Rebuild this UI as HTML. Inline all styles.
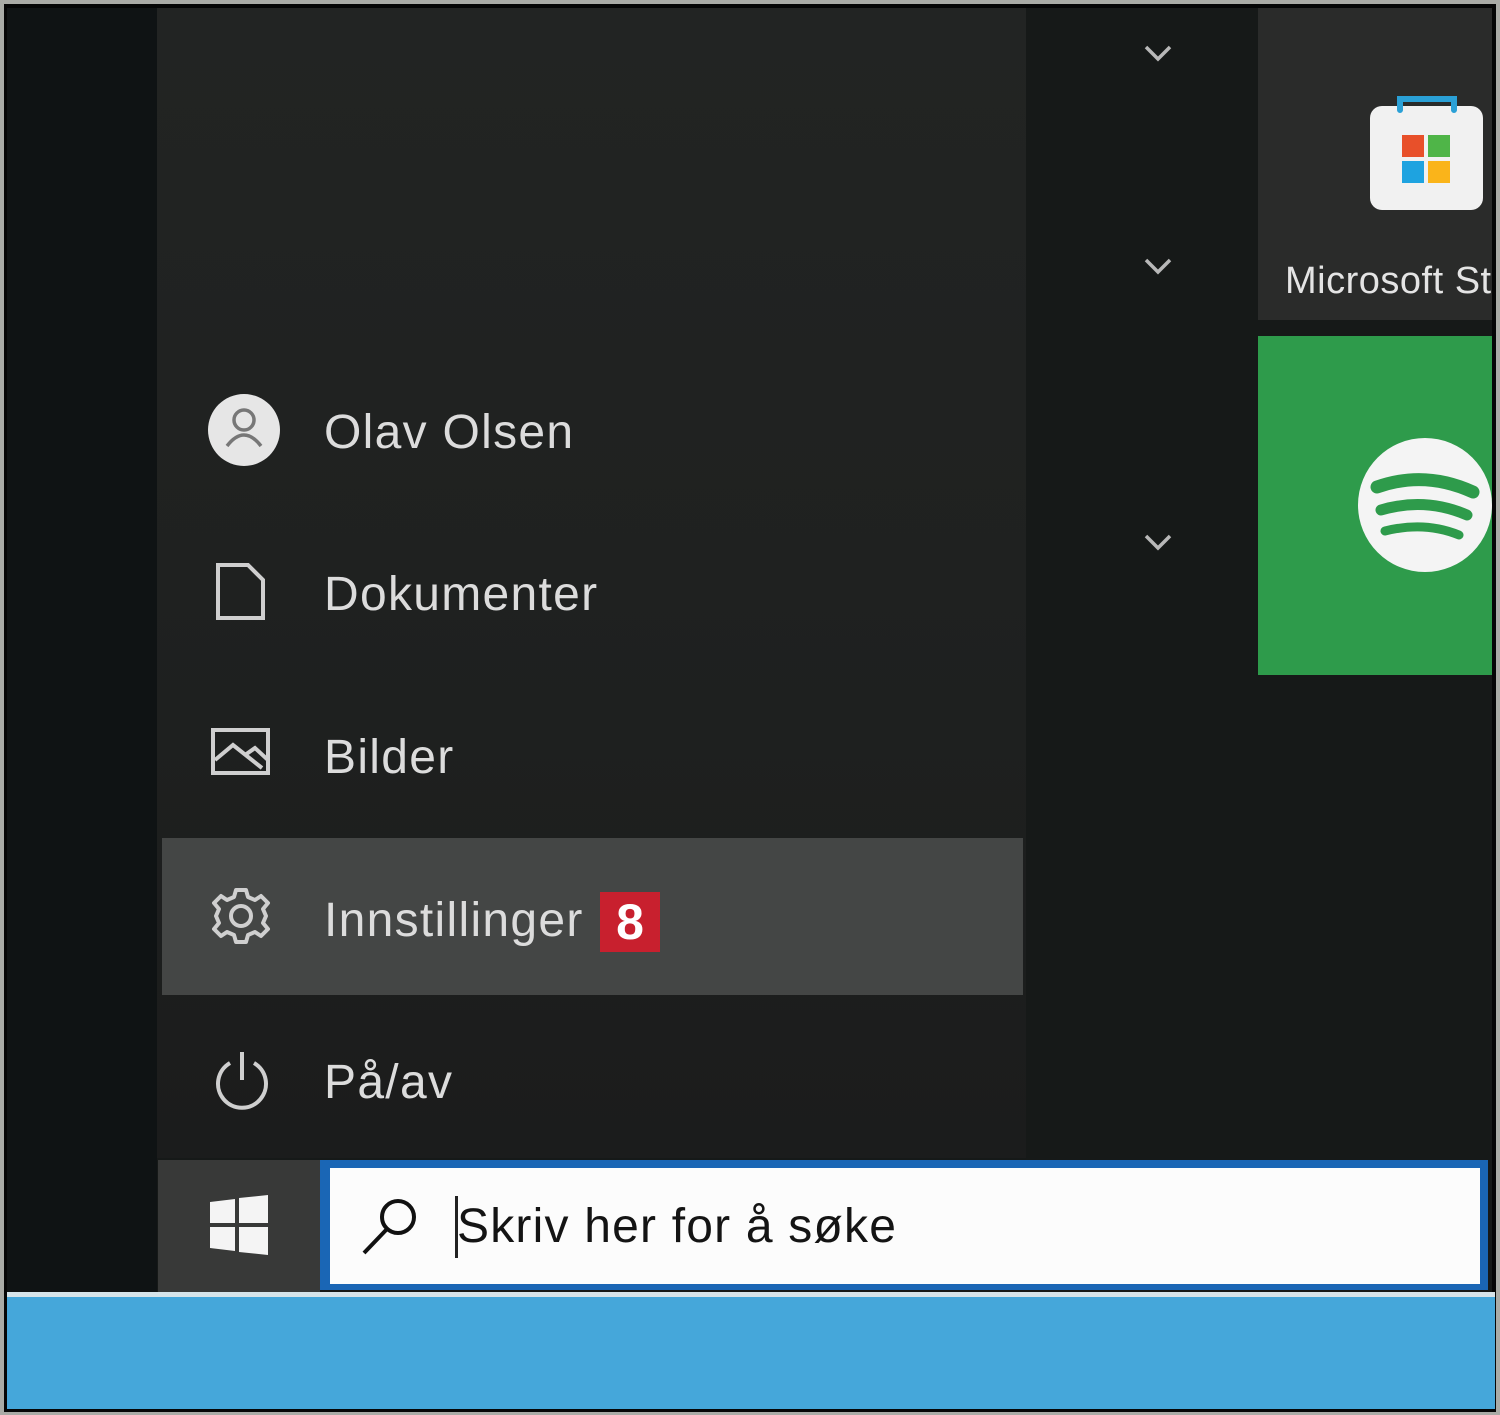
<!DOCTYPE html>
<html><head><meta charset="utf-8"><style>
html,body{margin:0;padding:0}
body{width:1500px;height:1415px;position:relative;overflow:hidden;background:#a9aba6;font-family:"Segoe UI","Liberation Sans",sans-serif}
.a{position:absolute}
.t{position:absolute;color:#dcdcdc;font-size:48px;line-height:1;letter-spacing:1.3px;white-space:nowrap}
</style></head><body>
<div class="a" style="left:4px;top:4px;width:1492px;height:1408px;background:#050606"></div>
<div class="a" style="left:7px;top:8px;width:150px;height:1284px;background:#0f1314"></div>
<div class="a" style="left:157px;top:8px;width:869px;height:1150px;background:linear-gradient(180deg,#222423 0%,#1f2120 50%,#1b1c1c 100%)"></div>
<div class="a" style="left:1026px;top:8px;width:466px;height:1150px;background:#161918"></div>
<div class="a" style="left:162px;top:838px;width:861px;height:157px;background:#444645"></div>
<svg class="a" style="left:1140px;top:40px" width="36" height="540" viewBox="0 0 36 540" fill="none" stroke="#b8b8b8" stroke-width="3.5">
<path d="M6 7 L18 19 L30 7"/><path d="M6 220 L18 232 L30 220"/><path d="M6 496 L18 508 L30 496"/></svg>
<div class="a" style="left:1258px;top:8px;width:234px;height:312px;background:#2a2b2a"></div>
<svg class="a" style="left:1360px;top:90px" width="130" height="130" viewBox="0 0 130 130">
<rect x="10" y="16" width="113" height="104" rx="12" fill="#f1f1f1"/>
<path d="M40 20 V9 H94 V20" fill="none" stroke="#2aa0d6" stroke-width="6" stroke-linecap="round"/>
<rect x="42" y="45" width="22" height="22" fill="#e8502a"/><rect x="68" y="45" width="22" height="22" fill="#4fb548"/>
<rect x="42" y="71" width="22" height="22" fill="#1ea3e0"/><rect x="68" y="71" width="22" height="22" fill="#fab41a"/></svg>
<div class="t" style="left:1285px;top:262px;font-size:38px;color:#e4e4e4;letter-spacing:0.5px">Microsoft St</div>
<div class="a" style="left:1258px;top:336px;width:234px;height:339px;background:#2e9b4b"></div>
<svg class="a" style="left:1355px;top:435px" width="137" height="140" viewBox="0 0 137 140">
<circle cx="70" cy="70" r="67" fill="#f4f4f4"/>
<g fill="none" stroke="#2e9b4b" stroke-linecap="round"><path d="M22 52 Q70 35 118 57" stroke-width="13"/><path d="M26 75 Q70 62 112 80" stroke-width="11"/><path d="M30 96 Q70 86 104 100" stroke-width="9"/></g></svg>
<svg class="a" style="left:200px;top:390px" width="90" height="730" viewBox="0 0 90 730" fill="none" stroke="#cfcfcf" stroke-width="4">
<circle cx="44" cy="40" r="36" fill="#e6e6e6" stroke="none"/>
<circle cx="44" cy="30" r="10" stroke="#777" stroke-width="3.5"/><path d="M27 56 Q44 34 61 56" stroke="#777" stroke-width="3.5"/>
<path d="M18 175 H48 L63 190 V228 H18 Z"/>
<rect x="13" y="340" width="55" height="43"/><path d="M15 370 L33 355 L62 378 M45 365 L55 358 L68 370"/>
<g transform="translate(41,526)"><circle r="10"/><path d="M-5 -26 L5 -26 L7 -19 L14 -16 L20 -20 L27 -13 L22 -7 L25 0 L22 7 L27 13 L20 20 L14 16 L7 19 L5 26 L-5 26 L-7 19 L-14 16 L-20 20 L-27 13 L-22 7 L-25 0 L-22 -7 L-27 -13 L-20 -20 L-14 -16 L-7 -19 Z" stroke-linejoin="round"/></g>
<path d="M30 673 A24 24 0 1 0 54 673"/><path d="M42 662 V690"/></svg>
<div class="t" style="left:324px;top:409px">Olav Olsen</div>
<div class="t" style="left:324px;top:571px">Dokumenter</div>
<div class="t" style="left:324px;top:734px">Bilder</div>
<div class="t" style="left:324px;top:897px">Innstillinger</div>
<div class="a" style="left:600px;top:892px;width:60px;height:60px;background:#c8202e;color:#fff;font:bold 50px/60px 'Liberation Sans',sans-serif;text-align:center">8</div>
<div class="t" style="left:324px;top:1059px">På/av</div>
<div class="a" style="left:157px;top:1158px;width:1335px;height:134px;background:#161918"></div>
<div class="a" style="left:158px;top:1160px;width:162px;height:132px;background:#383938"></div>
<svg class="a" style="left:208px;top:1195px" width="62" height="62" viewBox="0 0 62 62" fill="#f4f4f4">
<path d="M2 7 L27 4 V28 H2 Z"/><path d="M31 3 L60 0 V28 H31 Z"/><path d="M2 32 H27 V56 L2 53 Z"/><path d="M31 32 H60 V60 L31 57 Z"/></svg>
<div class="a" style="left:320px;top:1160px;width:1168px;height:130px;background:#1a66b5"></div>
<div class="a" style="left:330px;top:1168px;width:1150px;height:116px;background:#fcfcfc"></div>
<svg class="a" style="left:355px;top:1195px" width="70" height="65" viewBox="0 0 70 65" fill="none" stroke="#111" stroke-width="4">
<circle cx="43" cy="22" r="16"/><path d="M32 34 L9 58"/></svg>
<div class="a" style="left:455px;top:1196px;width:3px;height:62px;background:#222"></div>
<div class="t" style="left:457px;top:1203px;color:#141414;font-size:48px;letter-spacing:1.2px">Skriv her for å søke</div>
<div class="a" style="left:7px;top:1292px;width:1488px;height:5px;background:#d6e4ea"></div>
<div class="a" style="left:7px;top:1297px;width:1488px;height:112px;background:#45a7da"></div>
</body></html>
